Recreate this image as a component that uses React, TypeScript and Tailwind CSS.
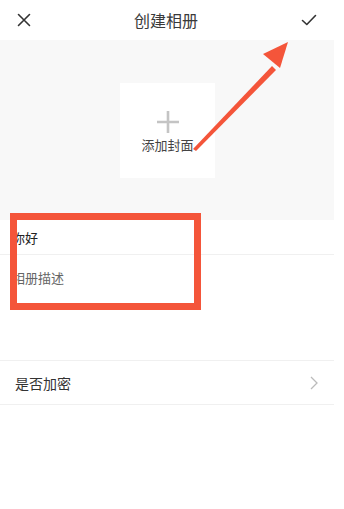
import React from "react";

export default function App() {
  return (
    <div
      className="relative w-[344px] h-[509px] bg-white overflow-hidden"
      style={{ fontFamily: '"Noto Sans CJK SC", "Noto Sans", sans-serif' }}
    >
      <div className="w-[334px] flex flex-col">
        {/* Header */}
        <div className="h-[40px] flex items-center justify-between px-[17px]">
          <svg width="14" height="14" viewBox="0 0 14 14" className="text-[#333]">
            <path d="M1.5 1.5 L12.5 12.5 M12.5 1.5 L1.5 12.5" stroke="currentColor" strokeWidth="1.6" strokeLinecap="round" />
          </svg>
          <div className="text-[16px] text-[#3a3a3a] leading-none">创建相册</div>
          <svg width="16" height="14" viewBox="0 0 16 14" className="text-[#333]">
            <path d="M1.5 7.5 L5.8 11.5 L14.5 2.5" stroke="currentColor" strokeWidth="1.6" fill="none" strokeLinecap="round" strokeLinejoin="round" />
          </svg>
        </div>
        {/* Cover area */}
        <div className="h-[180px] bg-[#f8f8f8] flex items-center justify-center">
          <div className="w-[95px] h-[95px] bg-white flex flex-col items-center ml-[1px]">
            <svg width="24" height="24" viewBox="0 0 24 24" className="mt-[27px]">
              <path d="M12 1 V23 M1 12 H23" stroke="#c4c4c4" strokeWidth="2.6" />
            </svg>
            <div className="mt-[4px] text-[13px] text-[#444] leading-none">添加封面</div>
          </div>
        </div>
        {/* Inputs */}
        <div className="h-[35px] flex items-center border-b border-[#f0f0f0] pl-[12px]">
          <span className="text-[13px] text-[#222] leading-none">你好</span>
        </div>
        <div className="h-[45px] flex items-center pl-[12px]">
          <span className="text-[13px] text-[#666] leading-none">相册描述</span>
        </div>
        <div className="h-[60px]" />
        {/* Encrypt row */}
        <div className="h-[45px] flex items-center justify-between border-t border-b border-[#f0f0f0] pl-[15px] pr-[16px]">
          <span className="text-[14px] text-[#333] leading-none">是否加密</span>
          <svg width="8" height="14" viewBox="0 0 8 14">
            <path d="M1 1 L7 7 L1 13" stroke="#bbb" strokeWidth="1.3" fill="none" />
          </svg>
        </div>
      </div>

      {/* Annotation: red rectangle */}
      <div className="absolute left-[10px] top-[213px] w-[191px] h-[97px] border-[7px] border-[#f4553a]" />

      {/* Annotation: arrow */}
      <svg className="absolute left-0 top-0" width="344" height="509" viewBox="0 0 344 509">
        <polygon points="193,149 272,66 276,70 196,151" fill="#f4553a" />
        <polygon points="263,54 288,42 280,68" fill="#f4553a" />
      </svg>
    </div>
  );
}
